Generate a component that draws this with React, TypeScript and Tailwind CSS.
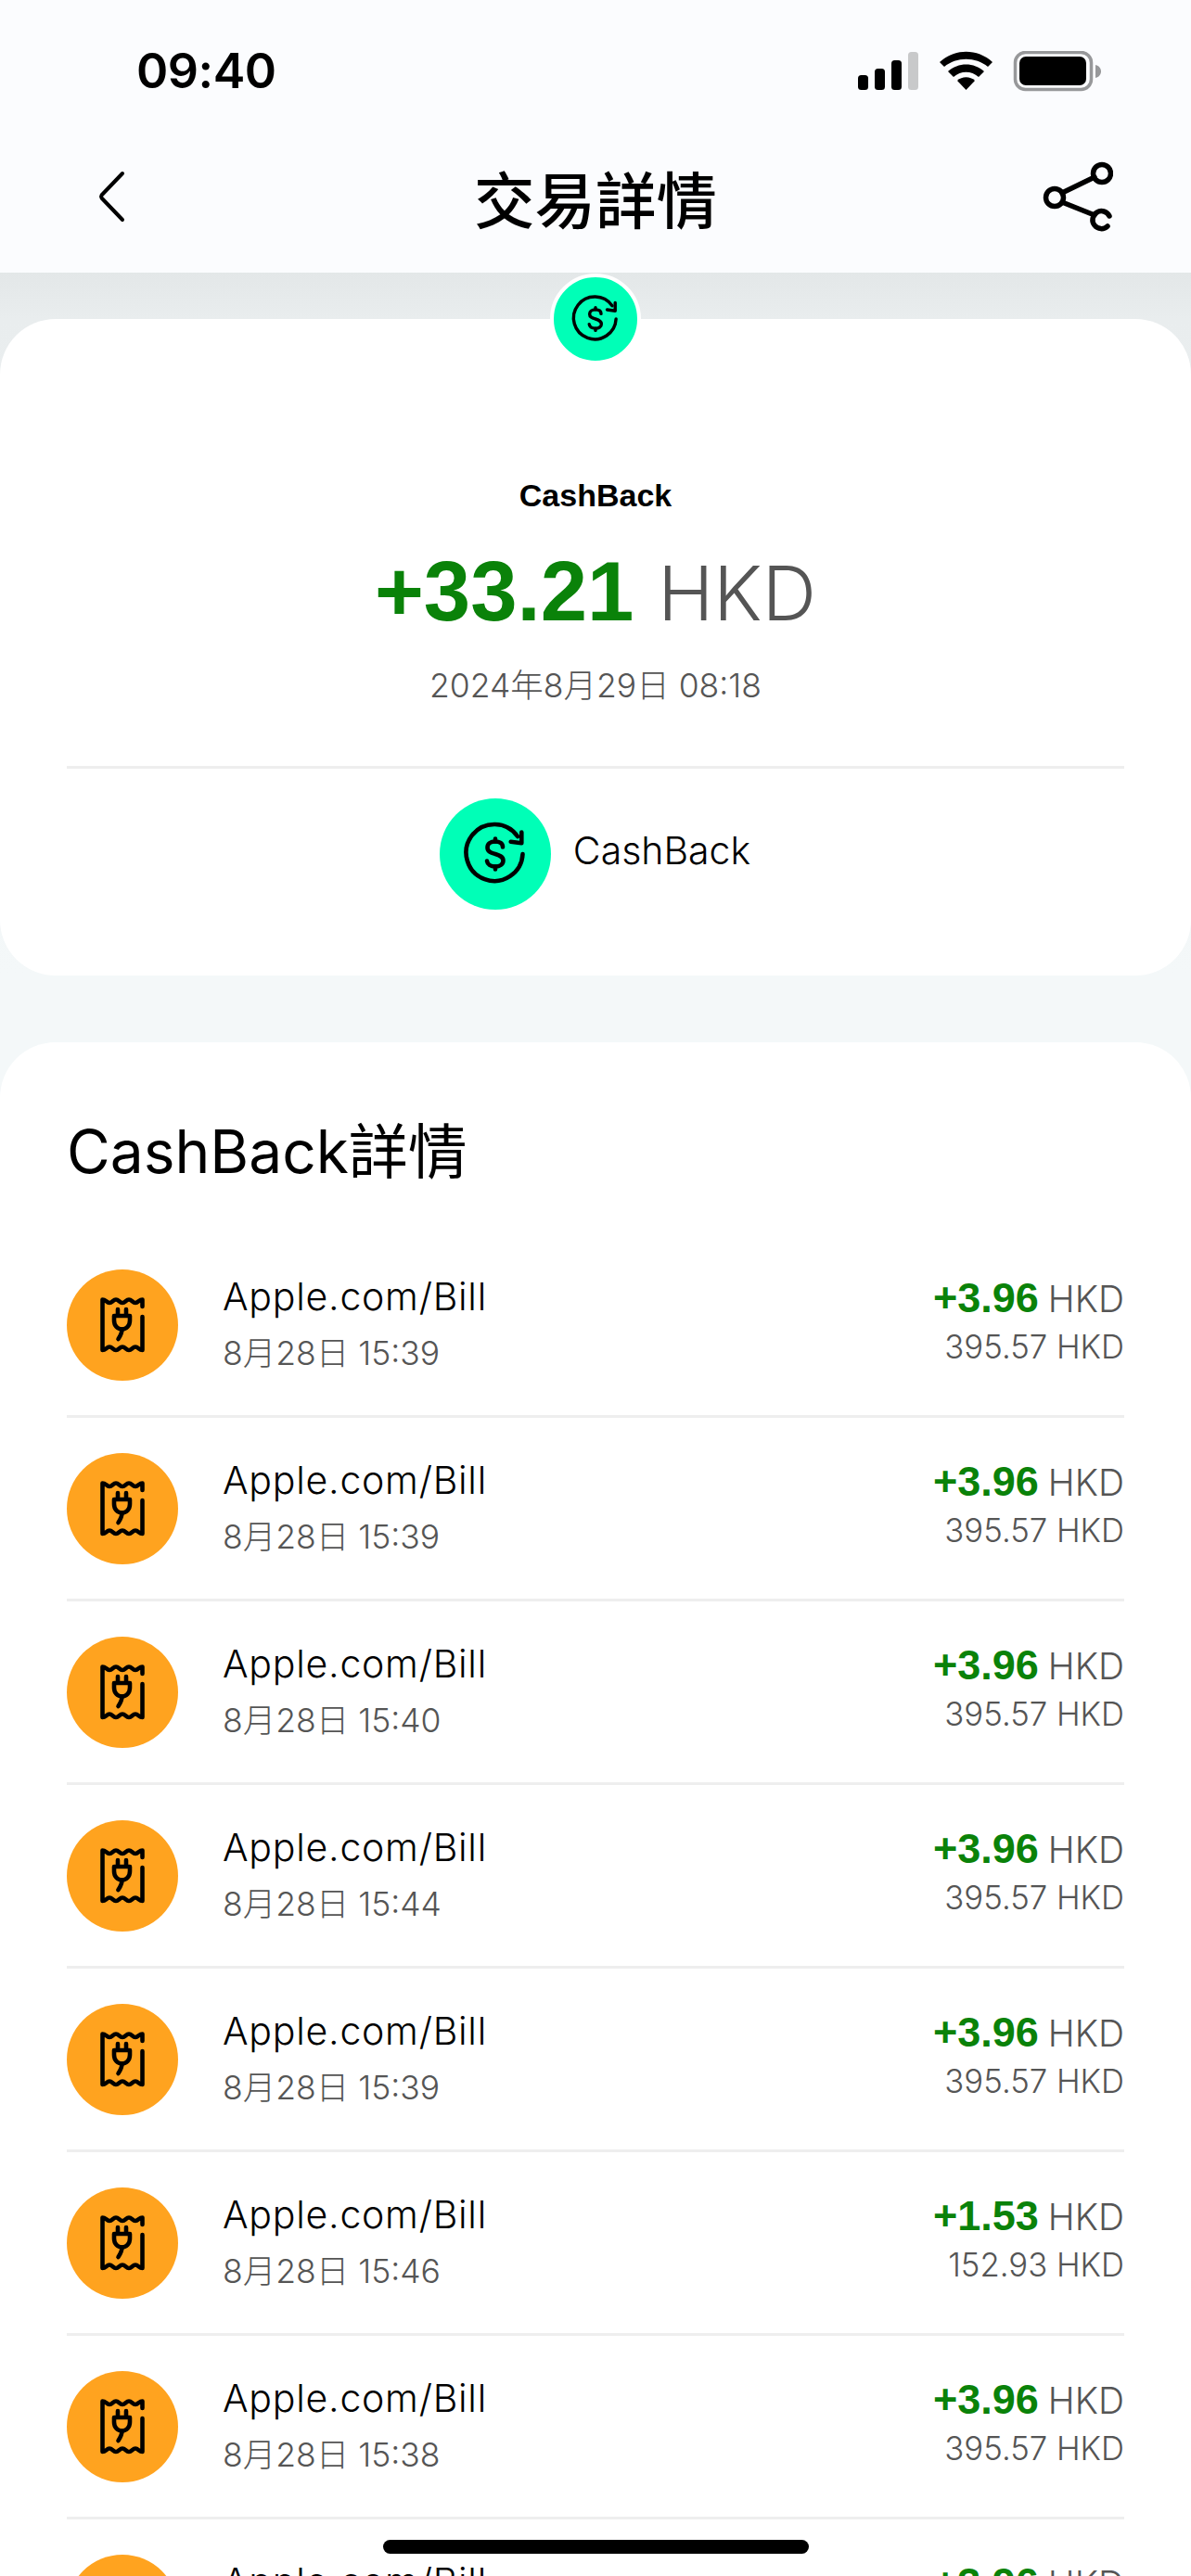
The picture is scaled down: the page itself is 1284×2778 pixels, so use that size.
const sans = "font-['Inter','Noto_Sans_CJK_TC',sans-serif]";

function CashIcon({ className }: { className: string }) {
  return (
    <svg viewBox="0 0 120 120" className={className} fill="none" stroke="#000" strokeWidth="4.6" strokeLinecap="round" strokeLinejoin="round">
      <path d="M89.5 60A30.5 30.5 0 1 1 84 41" />
      <path d="M88.3 36.5V48.3L76.7 46.7" />
      <path d="M68 52.5C68 48.5 64.5 46.5 60 46.5C54.5 46.5 51.5 49.3 51.5 53C51.5 57.5 55.5 58.6 60 60C64.5 61.4 68.5 62.8 68.5 67C68.5 71 65 73.5 60 73.5C55 73.5 51.5 71.2 51 67.5" />
      <path d="M60 43.5V46.5M60 73.5V76.5" />
    </svg>
  );
}

function ReceiptIcon() {
  return (
    <svg viewBox="0 0 120 120" className="w-[120px] h-[120px] shrink-0 rounded-full bg-[#ffa31f]" fill="none" stroke="#000" strokeWidth="4.6" strokeLinecap="round" strokeLinejoin="round">
      <path d="M81.5 40V32.5C78 32.5 77 36 74 36S70 32.5 67 32.5S63 36 60 36S56 32.5 53 32.5S49 36 46 36S42 32.5 38.5 32.5V87C42 87 43 83.5 46 83.5S50 87 53 87S57 83.5 60 83.5S64 87 67 87S71 83.5 74 83.5S78 87 81.5 87V51" />
      <path d="M55 43V50M64 43V50M51 50H68V55C68 60.5 64.5 64.5 59.5 64.5C54.5 64.5 51 60.5 51 55Z" />
      <path d="M59.5 64.5C59.5 69 57.5 72 55.5 75" />
    </svg>
  );
}

const rows = [
  ["15:39", "+3.96", "395.57"],
  ["15:39", "+3.96", "395.57"],
  ["15:40", "+3.96", "395.57"],
  ["15:44", "+3.96", "395.57"],
  ["15:39", "+3.96", "395.57"],
  ["15:46", "+1.53", "152.93"],
  ["15:38", "+3.96", "395.57"],
  ["15:41", "+3.96", "395.57"],
];

export default function App() {
  return (
    <div className={`${sans} relative w-[1284px] h-[2778px] overflow-hidden bg-[linear-gradient(#e3e7e8_294px,#e9edee_344px,#f4f8f9_1050px)]`}>
      <header className="relative z-10 h-[294px] bg-[#fbfcfe] px-[60px]">
        <div className="flex items-center justify-between h-[150px] pl-[87px] pr-[37px] pt-[3px]">
          <span className="text-[52px] leading-[60px] font-semibold tracking-[-0.5px] text-black">09:40</span>
          <svg viewBox="0 0 262 44" className="w-[262px] h-[44px]">
            <rect x="0" y="26" width="11" height="16" rx="3.5" fill="#000" />
            <rect x="18" y="19" width="11" height="23" rx="3.5" fill="#000" />
            <rect x="36" y="10" width="11" height="32" rx="3.5" fill="#000" />
            <rect x="54" y="1" width="11" height="41" rx="3.5" fill="#c8c9ca" />
            <path d="M88 12C104 -3 129 -3 145 12L140 17C127 6 106 6 93 17Z" fill="#000" />
            <path d="M97 22C108 12 125 12 136 22L130 28C122 21 111 21 103 28Z" fill="#000" />
            <path d="M107 32C112 27 121 27 126 32L116.500 42Z" fill="#000" />
            <rect x="169.500" y="1.500" width="82" height="40" rx="11" fill="none" stroke="#97989a" strokeWidth="3.500" />
            <rect x="174" y="6" width="72" height="31" rx="7" fill="#000" />
            <path d="M256 15C260 16 262 19 262 22C262 25 260 28 256 29Z" fill="#97989a" />
          </svg>
        </div>
        <div className="flex items-center h-[144px] pb-[16px]">
          <div className="flex-1 flex justify-start">
            <svg viewBox="0 0 30 56" className="w-[30px] h-[56px] ml-[46px] mb-[4px]" fill="none" stroke="#000" strokeWidth="4" strokeLinecap="round" strokeLinejoin="round">
              <path d="M26 3L3.500 26.500Q2.500 28 3.500 29.500L26 53" />
            </svg>
          </div>
          <h1 className="text-[65.500px] leading-[80px] font-medium text-black mt-[8px]">交易詳情</h1>
          <div className="flex-1 flex justify-end">
            <svg viewBox="0 0 76 76" className="w-[76px] h-[76px] mr-[24px] mb-[4px]" fill="none" stroke="#000" strokeWidth="5.500" strokeLinecap="round">
              <circle cx="13" cy="39" r="9.500" />
              <circle cx="64" cy="13" r="9.500" />
              <path d="M72 59A9.500 9.500 0 1 0 70 70" />
              <path d="M21 34L56 17M21 44L56 58" />
            </svg>
          </div>
        </div>
      </header>

      <main className="pt-[50px]">
        <section className="relative bg-white rounded-[60px] h-[708px] px-[72px] pt-[170px] flex flex-col items-center">
          <div className="absolute top-[-49px] left-[593px] w-[98px] h-[98px] rounded-full border-[4px] border-white bg-[#00ffb7]">
            <CashIcon className="w-[90px] h-[90px]" />
          </div>
          <div className="text-[34px] leading-[40px] font-bold text-black font-['Liberation_Sans',sans-serif]">CashBack</div>
          <div className="mt-[34px] leading-[100px] flex items-baseline gap-[26px]">
            <span className="text-[90.500px] font-bold text-[#0a8209] font-['Liberation_Sans',sans-serif]">+33.21</span>
            <span className="text-[81px] font-light text-[#555]">HKD</span>
          </div>
          <div className="mt-[28px] text-[35.500px] leading-[44px] font-light text-[#555]">2024年8月29日 08:18</div>
          <div className="mt-[64px] w-full border-t-[3px] border-[#eeeeee] pt-[32px] pr-[1px] flex justify-center items-center gap-[24px]">
            <div className="w-[120px] h-[120px] rounded-full bg-[#00ffb7]">
              <CashIcon className="w-[120px] h-[120px]" />
            </div>
            <span className="text-[41px] leading-[50px] font-light text-black mb-[8px]">CashBack</span>
          </div>
        </section>

        <section className="mt-[72px] bg-white rounded-t-[60px] px-[72px] pt-[78px]">
          <h2 className="text-[64px] leading-[80px] font-normal text-black">CashBack詳情</h2>
          <ul className="mt-[49px]">
            {rows.map(([time, gain, amount], i) => (
              <li key={i} className="flex items-center h-[198px] border-b-[3px] border-[#eeeeee] pt-[1px]">
                <ReceiptIcon />
                <div className="ml-[48px] flex-1 flex flex-col gap-[12px]">
                  <span className="text-[41px] leading-[50px] font-light tracking-[0.75px] text-black">Apple.com/Bill</span>
                  <span className="text-[35.500px] leading-[50px] font-light text-[#555]">8月28日 {time}</span>
                </div>
                <div className="flex flex-col items-end mb-[7px]">
                  <span className="leading-[50px] flex items-baseline gap-[10px]">
                    <span className="text-[45px] font-bold text-[#0a8209] font-['Liberation_Sans',sans-serif]">{gain}</span>
                    <span className="text-[39px] font-light text-[#555]">HKD</span>
                  </span>
                  <span className="text-[34.700px] leading-[50px] font-light text-[#555] mt-[1px]">{amount} HKD</span>
                </div>
              </li>
            ))}
          </ul>
        </section>
      </main>

      <div className="absolute left-[413px] top-[2739px] w-[459px] h-[15px] rounded-full bg-black" />
    </div>
  );
}
